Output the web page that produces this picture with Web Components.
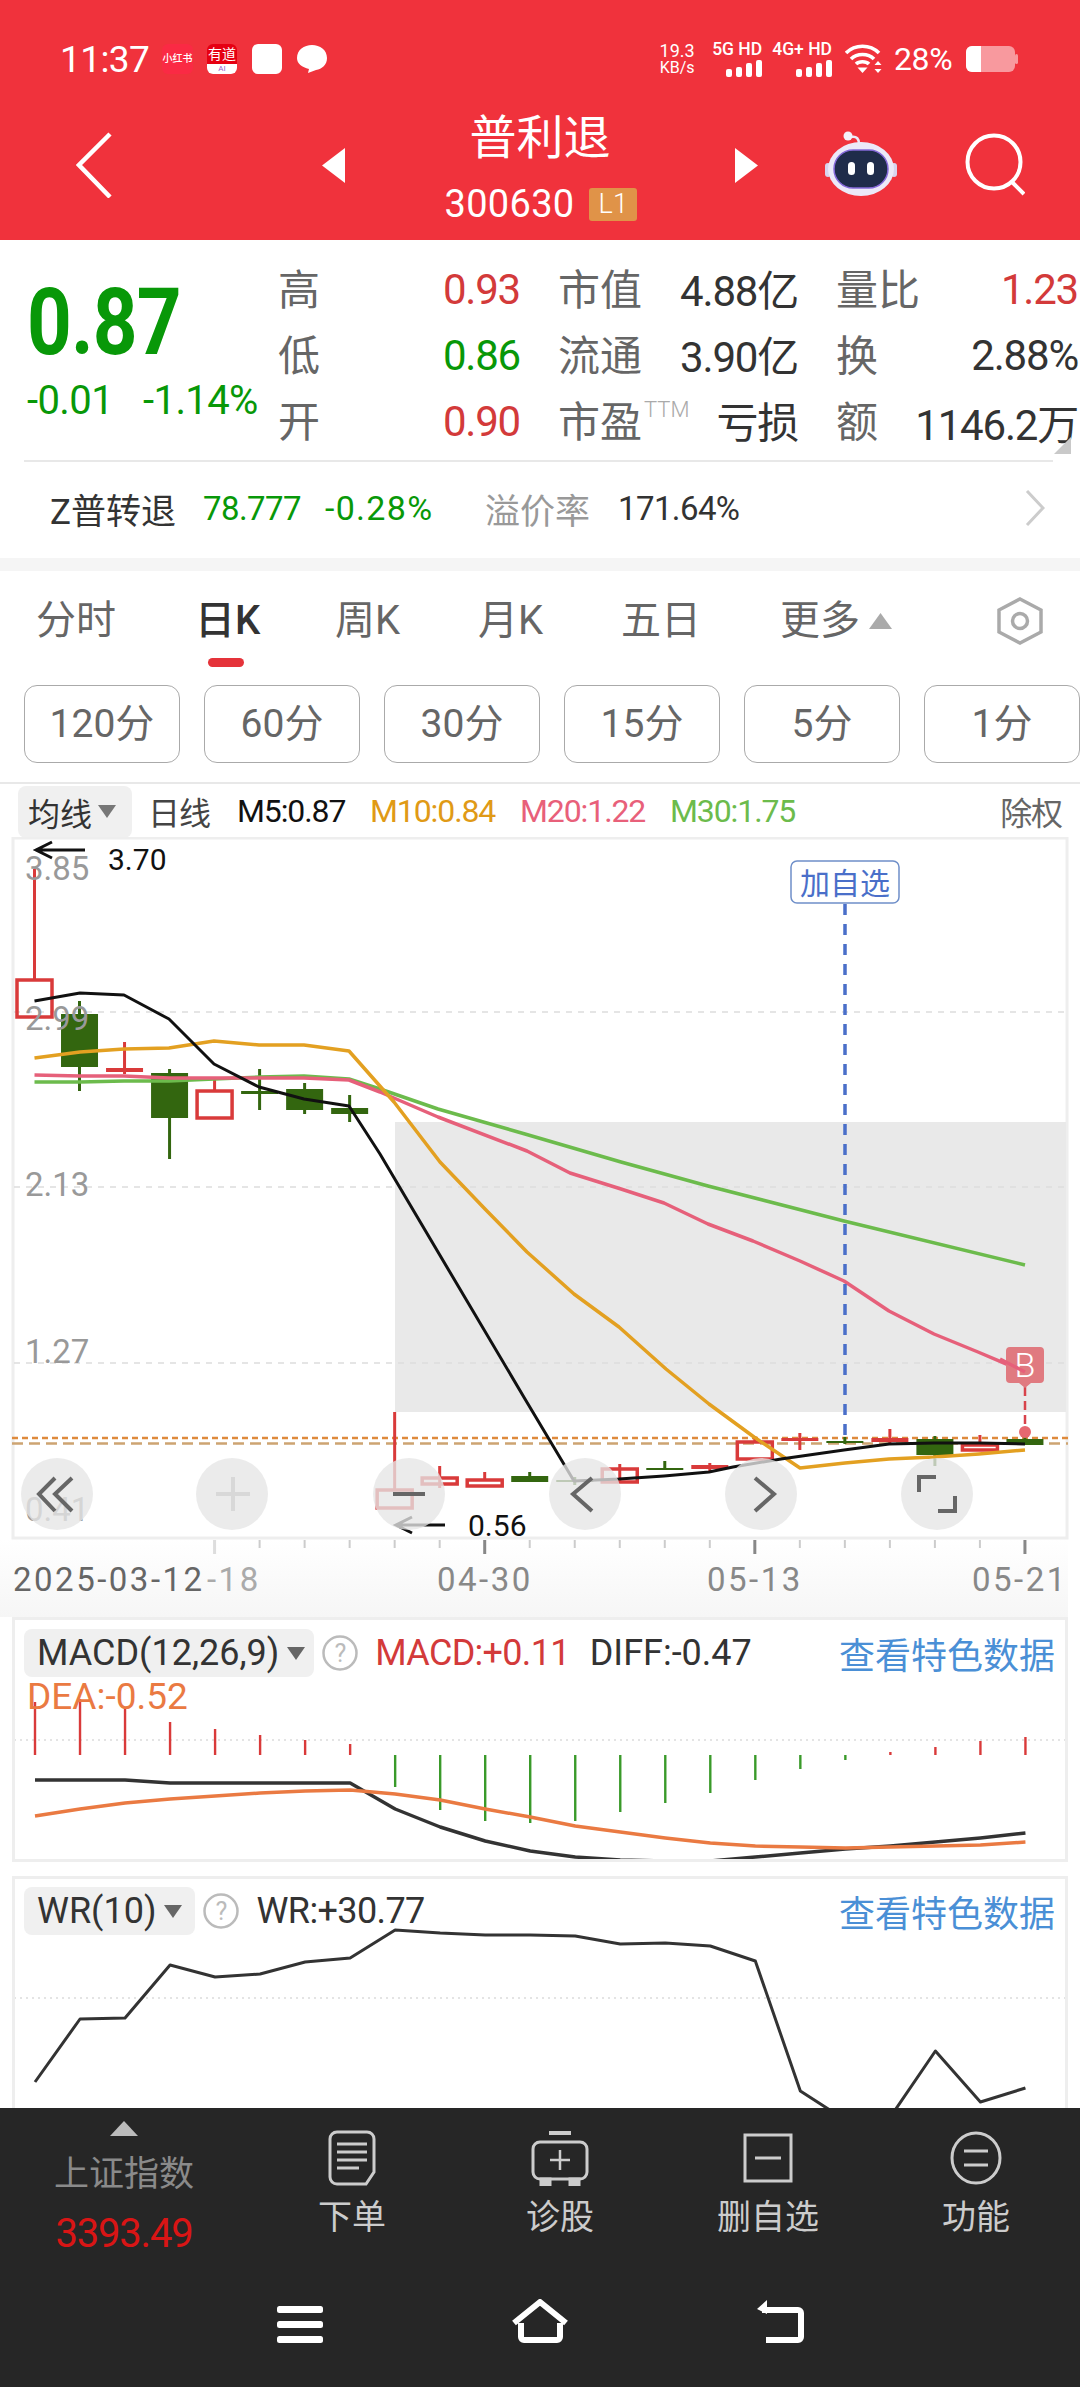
<!DOCTYPE html>
<html lang="zh">
<head>
<meta charset="utf-8">
<style>
  html, body { margin: 0; padding: 0; background: #fff; }
  body { width: 1080px; height: 2388px; overflow: hidden; font-family: Roboto, "Noto Sans CJK SC", sans-serif; display: flex; flex-direction: column; }
</style>
</head>
<body>
<status-bar></status-bar>
<stock-header name="普利退" code="300630" tag="L1"></stock-header>
<quote-panel></quote-panel>
<period-tabs></period-tabs>
<kline-chart></kline-chart>
<indicator-panel kind="macd" name="MACD(12,26,9)">
  <span style="color:#d33a3a;margin-left:17px">MACD:+0.11</span>
  <span style="color:#333;margin-left:20px;letter-spacing:0">DIFF:-0.47</span>
</indicator-panel>
<indicator-panel kind="wr" name="WR(10)">
  <span style="color:#333;margin-left:17px;letter-spacing:-.6px">WR:+30.77</span>
</indicator-panel>
<bottom-nav></bottom-nav>

<script>
class StatusBar extends HTMLElement {
  constructor () {
    super()
    this.attachShadow({ mode: 'open' })
  }

  connectedCallback () {
    const bars = `<svg width="36" height="17" viewBox="0 0 36 17"><g fill="#fff">
      <rect x="0" y="9" width="6" height="8" rx="2"/><rect x="10" y="7" width="6" height="10" rx="2"/>
      <rect x="20" y="3" width="6" height="14" rx="2"/><rect x="30" y="0" width="6" height="17" rx="2"/></g></svg>`
    this.shadowRoot.innerHTML = /*html*/`
    <style>
      :host { display: flex; justify-content: space-between; align-items: flex-start; height: 100px; box-sizing: border-box; padding: 44px 62px 0 60px; background: #f0323c; color: #fff; }
      .left, .right { display: flex; align-items: center; height: 30px; }
      .time { font-size: 37px; letter-spacing: -.6px; width: 102px; }
      .xhs { width: 31px; height: 30px; background: #fa2a44; border-radius: 6px; font-size: 10px; font-weight: 500; line-height: 30px; text-align: center; white-space: nowrap; overflow: hidden; }
      .yd { width: 30px; height: 30px; background: #e60012; border-radius: 6px; margin-left: 14px; font-size: 14px; line-height: 20px; text-align: center; position: relative; overflow: hidden; white-space: nowrap; }
      .yd b { position: absolute; left: 0; right: 0; bottom: 0; height: 10px; background: #fff; color: #9a5bd0; font: 8px/10px Roboto; }
      .sq { width: 30px; height: 30px; background: #fff; border-radius: 6px; margin-left: 15px; }
      .bubble { margin-left: 15px; display: block; }
      .speed { width: 36px; text-align: center; font-size: 18px; line-height: 17px; margin-right: 17px; white-space: nowrap; }
      .speed small { display: block; font-size: 16px; }
      .net { display: flex; flex-direction: column; align-items: flex-end; font-size: 17.500px; line-height: 15px; font-weight: 500; margin-right: 10px; gap: 3px; white-space: nowrap; }
      .wifi { margin-left: 3px; margin-right: 12px; display: block; }
      .pct { font-size: 32px; width: 61px; margin-right: 11px; letter-spacing: -.4px; white-space: nowrap; }
    </style>
    <div class="left">
      <span class="time">11:37</span>
      <span class="xhs">小红书</span>
      <span class="yd">有道<b>AI</b></span>
      <span class="sq"></span>
      <svg class="bubble" width="30" height="30" viewBox="0 0 30 30"><path d="M15 1c8 0 15 5 15 13 0 7-5 11-11 12l-8 3 1-4C5 23 0 20 0 14 0 6 7 1 15 1z" fill="#fff"/></svg>
    </div>
    <div class="right">
      <div class="speed">19.3<small>KB/s</small></div>
      <div class="net">5G HD${bars}</div>
      <div class="net">4G+ HD${bars}</div>
      <svg class="wifi" width="37" height="30" viewBox="0 0 37 30" fill="none" stroke="#fff" stroke-width="3.6">
        <path d="M1 9c9-9 24-9 33 0"/><path d="M6 15c6-6 17-6 23 0"/><path d="M11 20c3-3 10-3 13 0"/>
        <path d="M17.500 29l-5-5.500h10z" fill="#fff" stroke="none"/><path d="M33 17l-3.500 4h7zM33 29l-3.500-4h7z" fill="#fff" stroke="none"/>
      </svg>
      <span class="pct">28%</span>
      <svg width="52" height="26" viewBox="0 0 52 26"><rect x="0" width="49" height="26" rx="6" fill="#fff" opacity=".5"/><rect x="49" y="8" width="3" height="10" rx="1.500" fill="#fff" opacity=".5"/><path d="M6 0h9v26H6a6 6 0 0 1-6-6V6a6 6 0 0 1 6-6z" fill="#fff"/></svg>
    </div>
    `
  }
}

class StockHeader extends HTMLElement {
  constructor () {
    super()
    this.attachShadow({ mode: 'open' })
  }

  connectedCallback () {
    this.shadowRoot.innerHTML = /*html*/`
    <style>
      :host { display: grid; grid-template-columns: 76px 36px 210px 23px 390px 23px 67px 72px 68px 60px; align-items: center; height: 130px; padding-bottom: 10px; background: #f0323c; color: #fff; }
      .back { grid-column: 2; display: block; }
      .tri { display: block; }
      .mid { display: flex; flex-direction: column; align-items: center; padding-top: 6px; }
      .name { font-size: 47px; line-height: 46px; height: 46px; }
      .sub { display: flex; align-items: center; margin-top: 26px; margin-left: 2px; font-size: 38px; line-height: 34px; letter-spacing: .3px; }
      .tag { margin-left: 15px; width: 48px; height: 33px; background: #e09348; border-radius: 3px; font-size: 27px; line-height: 33px; text-align: center; font-weight: 300; }
      .bot { grid-column: 8; display: block; margin-top: -5px; }
    </style>
    <svg class="back" width="36" height="66" viewBox="0 0 36 66" fill="none" stroke="#fff" stroke-width="4.500"><path d="M34 2L3 33l31 32"/></svg>
    <svg class="tri" style="grid-column:4" width="23" height="35" viewBox="0 0 23 35"><path d="M23 0v35L0 17.500z" fill="#fff"/></svg>
    <div class="mid">
      <div class="name">${this.getAttribute('name')}</div>
      <div class="sub">${this.getAttribute('code')}<span class="tag">${this.getAttribute('tag')}</span></div>
    </div>
    <svg class="tri" width="23" height="35" viewBox="0 0 23 35"><path d="M0 0v35l23-17.500z" fill="#fff"/></svg>
    <svg class="bot" width="72" height="66" viewBox="0 0 72 66">
      <path d="M26 7c6-1 8 2 8 7" fill="none" stroke="#eceaf8" stroke-width="2.500"/><circle cx="23" cy="6" r="4.500" fill="#f4f2fb"/>
      <rect x="0" y="33" width="6" height="14" rx="3" fill="#d8d4ee"/><rect x="66" y="33" width="6" height="14" rx="3" fill="#d8d4ee"/>
      <ellipse cx="36" cy="39" rx="33" ry="27" fill="#ece9f8"/>
      <rect x="9" y="20" width="54" height="38" rx="19" fill="#1f2c4a" stroke="#8468d8" stroke-width="1.500"/>
      <rect x="23" y="32" width="7" height="13" rx="3.500" fill="#fff"/><rect x="42" y="32" width="7" height="13" rx="3.500" fill="#fff"/>
    </svg>
    <svg style="grid-column:10;display:block" width="60" height="64" viewBox="0 0 60 64" fill="none" stroke="#fff" stroke-width="4"><circle cx="29" cy="29" r="26.500"/><path d="M47 49l12 12"/></svg>
    `
  }
}

class QuotePanel extends HTMLElement {
  constructor () {
    super()
    this.attachShadow({ mode: 'open' })
  }

  connectedCallback () {
    const rows = [
      ['高', '0.93', 'r', '市值', '4.88亿', '量比', '1.23', 'r'],
      ['低', '0.86', 'g', '流通', '3.90亿', '换', '2.88%', ''],
      ['开', '0.90', 'r', '市盈<sup>TTM</sup>', '亏损', '额', '1146.2万', '']
    ]
    const cell = (a, b, c) => `<div class="cell"><span class="lb">${a}</span><span class="val ${c}">${b}</span></div>`
    this.shadowRoot.innerHTML = /*html*/`
    <style>
      :host { display: block; height: 318px; background: #fff; color: #333; position: relative; }
      .top { display: flex; height: 220px; box-sizing: border-box; padding: 16px 0 0 27px; }
      .price { width: 253px; flex: none; }
      .big { font-size: 93px; line-height: 91px; font-weight: 700; color: #089808; transform: scaleX(.84); transform-origin: 0 0; margin-top: 21px; letter-spacing: -1px; }
      .chg { display: flex; font-size: 40px; line-height: 40px; color: #089808; margin-top: 13px; letter-spacing: -.6px; white-space: nowrap; }
      .chg span + span { margin-left: 30px; }
      .grid { display: grid; grid-template-columns: 240px 238px 240px; column-gap: 40px; grid-auto-rows: 66px; align-items: center; }
      .cell { display: flex; justify-content: space-between; align-items: center; white-space: nowrap; }
      .lb { font-size: 42px; color: #666; position: relative; top: -3px; left: -2px; }
      sup { position: absolute; left: 86px; top: 11px; font-size: 22px; line-height: 22px; color: #aaa; font-weight: 300; }
      .val { font-size: 42px; letter-spacing: -1.200px; color: #333; }
      .cell:nth-child(3n+2) .val { position: relative; top: -2px; }
      .r { color: #d33a3a; }
      .g { color: #089808; }
      .corner { position: absolute; left: 1054px; top: 197px; }
      .line { margin: 0 27px 0 24px; height: 2px; background: #e8e8e8; }
      .bond { display: flex; align-items: center; height: 92px; padding: 0 0 4px 50px; font-size: 35px; white-space: nowrap; }
      .bond .num { font-size: 33px; letter-spacing: -.6px; }
      .bond .wide { font-size: 34px; letter-spacing: 1.300px; }
      .bond svg { margin-left: auto; margin-right: 35px; display: block; }
    </style>
    <div class="top">
      <div class="price">
        <div class="big">0.87</div>
        <div class="chg"><span>-0.01</span><span>-1.14%</span></div>
      </div>
      <div class="grid">
        ${rows.map(r => cell(r[0], r[1], r[2]) + cell(r[3], r[4], '') + cell(r[5], r[6], r[7])).join('')}
      </div>
    </div>
    <svg class="corner" width="17" height="17" viewBox="0 0 17 17"><path d="M17 0v17H0z" fill="#c9c9c9"/></svg>
    <div class="line"></div>
    <div class="bond">
      <span style="width:153px;color:#333">Z普转退</span>
      <span class="num" style="color:#089808;width:122px">78.777</span>
      <span class="num wide" style="color:#089808;width:160px">-0.28%</span>
      <span style="color:#999;width:133px">溢价率</span>
      <span class="num" style="color:#333">171.64%</span>
      <svg width="20" height="36" viewBox="0 0 20 36" fill="none" stroke="#ccc" stroke-width="3"><path d="M2 1l16 17L2 35"/></svg>
    </div>
    `
  }
}

class PeriodTabs extends HTMLElement {
  constructor () {
    super()
    this.attachShadow({ mode: 'open' })
  }

  connectedCallback () {
    const btns = ['120分', '60分', '30分', '15分', '5分', '1分']
    this.shadowRoot.innerHTML = /*html*/`
    <style>
      :host { display: block; background: #fff; border-top: 13px solid #f5f5f5; color: #666; }
      .tabs { display: grid; grid-template-columns: 159px 140px 143px 143px 159px 214px 48px; align-items: center; height: 96px; padding: 2px 0 0 36px; margin-bottom: 11px; font-size: 40px; line-height: 72px; white-space: nowrap; }
      .on { color: #333; position: relative; font-weight: 500; }
      .on::after { content: ""; position: absolute; left: 13px; top: 73px; width: 36px; height: 9px; border-radius: 5px; background: #e5333a; }
      .more { display: flex; align-items: center; gap: 9px; }
      .gear { margin-left: 2px; display: block; }
      .btns { display: flex; gap: 24px; padding: 5px 0 0 24px; overflow: hidden; }
      .btn { flex: none; width: 156px; height: 78px; box-sizing: border-box; border: 1px solid #aaa; border-radius: 13px; font-size: 39px; line-height: 76px; text-align: center; letter-spacing: 0; }
      .legend { display: flex; align-items: center; height: 55px; margin-top: 19px; border-top: 2px solid #e8e8e8; font-size: 32px; white-space: nowrap; box-sizing: border-box; padding: 0 18px; }
      .legend span { letter-spacing: -1.100px; }
      .drop { display: flex; align-items: center; gap: 6px; width: 114px; height: 52px; box-sizing: border-box; padding-left: 10px; background: #f0f0f0; border-radius: 8px; color: #333; margin-right: 16px; margin-top: 2px; }
      .cq { margin-left: auto; color: #666; font-size: 32px; padding-right: 0; }
    </style>
    <div class="tabs">
      <span>分时</span><span class="on">日K</span><span>周K</span><span>月K</span><span>五日</span>
      <span class="more">更多<svg width="23" height="16" viewBox="0 0 23 16"><path d="M11.500 0L23 16H0z" fill="#aaa"/></svg></span>
      <svg class="gear" width="48" height="48" viewBox="0 0 48 48" fill="none" stroke="#aaa"><path d="M24 2l21 11v22L24 46 3 35V13z" stroke-width="3.500"/><circle cx="24" cy="24" r="7.500" stroke-width="3.500"/></svg>
    </div>
    <div class="btns">${btns.map(b => `<div class="btn">${b}</div>`).join('')}</div>
    <div class="legend">
      <div class="drop">均线<svg width="18" height="13" viewBox="0 0 18 13"><path d="M0 0h18L9 13z" fill="#777"/></svg></div>
      <span style="color:#444;width:89px">日线</span>
      <span style="color:#111;width:133px">M5:0.87</span>
      <span style="color:#e09a16;width:150px">M10:0.84</span>
      <span style="color:#e8607a;width:150px">M20:1.22</span>
      <span style="color:#6cbb4c">M30:1.75</span>
      <span class="cq">除权</span>
    </div>
    `
  }
}

const XI = i => 34.5 + i * 45.02
const poly = (pts, color, w) => `<polyline points="${pts.map(p => p.join(',')).join(' ')}" fill="none" stroke="${color}" stroke-width="${w}" stroke-linejoin="round"/>`

class KlineChart extends HTMLElement {
  constructor () {
    super()
    this.attachShadow({ mode: 'open' })
  }

  connectedCallback () {
    const RED = '#d93a3a'
    const GREEN = '#33660f'
    // i, wick top, wick bottom, body top, body bottom, hollow
    const candles = [
      [0, 870, 980, 980, 1018, 1, 'r'], [1, 1002, 1092, 1015, 1068, 0, 'g'], [2, 1043, 1075, 1069, 1073, 0, 'r'],
      [3, 1070, 1160, 1074, 1119, 0, 'g'], [4, 1081, 1092, 1091, 1119, 1, 'r'], [5, 1070, 1111, 1092, 1095, 0, 'g'],
      [6, 1084, 1115, 1090, 1111, 0, 'g'], [7, 1096, 1123, 1109, 1115, 0, 'g'], [8, 1413, 1490, 1490, 1509, 1, 'r'],
      [9, 1467, 1489, 1478, 1485, 1, 'r'], [10, 1473, 1480, 1480, 1487, 1, 'r'], [11, 1473, 1483, 1477, 1483, 0, 'g'],
      [12, 1478, 1486, 1481, 1483, 0, 'g'], [13, 1465, 1483, 1469, 1483, 1, 'r'], [14, 1462, 1471, 1469, 1471, 0, 'g'],
      [15, 1464, 1472, 1466, 1470, 0, 'r'], [16, 1437, 1442, 1442, 1460, 1, 'r'], [17, 1434, 1451, 1439, 1442, 0, 'r'],
      [18, 1438, 1445, 1442, 1444, 0, 'g'], [19, 1430, 1446, 1439, 1443, 0, 'r'], [20, 1437, 1467, 1440, 1456, 0, 'g'],
      [21, 1436, 1445, 1445, 1451, 1, 'r'], [22, 1433, 1446, 1440, 1446, 0, 'g']
    ]
    const candleSvg = candles.map(([i, wt, wb, bt, bb, hollow, c]) => {
      const x = XI(i)
      const col = c === 'r' ? RED : GREEN
      const wick = `<line x1="${x}" x2="${x}" y1="${wt}" y2="${wb}" stroke="${col}" stroke-width="3"/>`
      return hollow
        ? wick + `<rect x="${x - 17.5}" y="${bt + 1}" width="35" height="${bb - bt - 1}" fill="none" stroke="${col}" stroke-width="3.500"/>`
        : wick + `<rect x="${x - 18.5}" y="${bt}" width="37" height="${bb - bt}" fill="${col}"/>`
    }).join('')

    const m5 = [[34.5, 1002], [80, 994], [124, 996], [169, 1020], [214, 1065], [259, 1088], [304, 1100], [349, 1107], [380, 1155], [525, 1400], [574, 1482], [619, 1480], [664, 1477], [709, 1473], [733, 1468], [781, 1460], [844, 1451], [889, 1445], [934, 1444], [979, 1444], [1025, 1445]]
    const m10 = [[34.5, 1059], [80, 1053], [124, 1050], [169, 1049], [214, 1042], [259, 1046], [304, 1046], [349, 1052], [394, 1103], [440, 1163], [485, 1210], [527, 1253], [574, 1295], [619, 1328], [666, 1370], [709, 1405], [754, 1438], [800, 1469], [845, 1464], [889, 1460], [934, 1458], [979, 1455], [1025, 1451]]
    const m20 = [[34.5, 1076], [80, 1077], [124, 1077], [169, 1079], [214, 1079], [259, 1079], [304, 1079], [349, 1081], [380, 1093], [438, 1118], [527, 1152], [570, 1174], [621, 1190], [664, 1204], [708, 1225], [753, 1242], [800, 1262], [844, 1282], [889, 1312], [934, 1335], [978, 1353], [1025, 1373]]
    const m30 = [[34.5, 1083], [80, 1083], [124, 1082], [169, 1082], [214, 1080], [259, 1078], [304, 1077], [349, 1080], [380, 1090], [438, 1110], [525, 1135], [621, 1163], [708, 1187], [844, 1222], [1025, 1266]]

    const ticks = []
    for (let i = 4; i < 23; i++) {
      const major = (i - 4) % 6 === 0
      ticks.push(`<line x1="${XI(i)}" x2="${XI(i)}" y1="1541" y2="${major ? 1555 : 1549}" stroke="${i === 4 ? '#ddd' : major ? '#888' : '#ccc'}" stroke-width="${major ? 3 : 2}"/>`)
    }
    const axis = (y, t) => `<text x="25" y="${y}" class="axis">${t}</text>`
    const date = (x, t, col) => `<text x="${x}" y="1592" class="date" fill="${col}">${t}</text>`
    const circle = x => `<circle cx="${x}" cy="1495" r="36" fill="#e6e6e6" fill-opacity=".78"/>`

    this.shadowRoot.innerHTML = /*html*/`
    <style>
      :host { display: block; height: 780px; background: #fff; }
      svg { display: block; }
      text { font-family: Roboto, "Noto Sans CJK SC", sans-serif; }
      .axis { font-size: 33px; fill: #999; }
      .hi { font-size: 30px; fill: #111; }
      .date { font-size: 33px; letter-spacing: 2.500px; }
    </style>
    <svg width="1080" height="780" viewBox="0 838 1080 780">
      <defs><linearGradient id="band" x1="0" y1="0" x2="0" y2="1"><stop offset="0" stop-color="#fff"/><stop offset="1" stop-color="#f6f6f6"/></linearGradient></defs>
      <rect x="0" y="1540" width="1068" height="78" fill="url(#band)"/>
      <rect x="13" y="839" width="1054" height="700" fill="#fff" stroke="#eee" stroke-width="3"/>
      <rect x="395" y="1123" width="671" height="290" fill="#e9e9e9"/>
      <g stroke="#ddd" stroke-width="1.500" stroke-dasharray="6 6">
        <line x1="14" x2="1066" y1="1013" y2="1013"/><line x1="14" x2="1066" y1="1188" y2="1188"/><line x1="14" x2="1066" y1="1364" y2="1364"/>
      </g>
      <line x1="12" x2="1068" y1="1439" y2="1439" stroke="#de8a3c" stroke-width="2.500" stroke-dasharray="6 4"/>
      <line x1="12" x2="1068" y1="1444.500" y2="1444.500" stroke="#cda472" stroke-width="2.500" stroke-dasharray="11 6"/>
      ${candleSvg}
      ${poly(m30, '#6cbb4c', 3.5)}
      ${poly(m20, '#e6607a', 3.5)}
      ${poly(m10, '#e3a021', 3.5)}
      ${poly(m5, '#111', 3)}
      <line x1="845" x2="845" y1="905" y2="1440" stroke="#4a6fc9" stroke-width="3.500" stroke-dasharray="11 9"/>
      <rect x="791" y="862" width="108" height="42" rx="6" fill="#fff" stroke="#6f8fc9" stroke-width="1.500"/>
      <text x="845" y="895" text-anchor="middle" font-size="30" fill="#4a6fc9">加自选</text>
      <line x1="1025" x2="1025" y1="1388" y2="1430" stroke="#d8434b" stroke-width="2.500" stroke-dasharray="9 5"/>
      <circle cx="1025" cy="1433" r="6" fill="#e66870"/>
      <path d="M1010 1348h30a4 4 0 0 1 4 4v28a4 4 0 0 1-4 4h-9l-6 5-6-5h-9a4 4 0 0 1-4-4v-28a4 4 0 0 1 4-4z" fill="#e07a80"/>
      <text x="1025" y="1378" text-anchor="middle" font-size="34" font-weight="300" fill="#fff">B</text>
      <polyline points="1000,1360 1025,1373" fill="none" stroke="#e6607a" stroke-width="3.500"/>
      ${axis(881, '3.85')}${axis(1031, '2.99')}${axis(1197, '2.13')}${axis(1364, '1.27')}
      <path d="M85 851H36M52 843l-16 8 16 8" fill="none" stroke="#111" stroke-width="3"/>
      <text x="108" y="871" class="hi">3.70</text>
      <path d="M445 1526H396M412 1518l-16 8 16 8" fill="none" stroke="#111" stroke-width="3"/>
      <text x="468" y="1537" class="hi">0.56</text>
      ${axis(1522, '0.41')}
      ${[57, 232, 409, 585, 761, 937].map(circle).join('')}
      <g fill="none" stroke="#666" stroke-width="4">
        <path d="M55 1479l-16 16 16 17M72 1479l-17 16 17 17"/>
        <path d="M393 1495h32"/>
        <path d="M592 1479l-19 16 19 17"/>
        <path d="M755 1479l19 16-19 17"/>
        <path d="M919 1493v-15h17M938 1512h17v-15"/>
      </g>
      <path d="M216 1495h34M233 1478v34" fill="none" stroke="#d8d8d8" stroke-width="4"/>
      ${ticks.join('')}
      ${date(13, '2025-03-12', '#666')}${date(207, '-18', '#aaa')}${date(437, '04-30', '#888')}${date(707, '05-13', '#888')}${date(972, '05-21', '#888')}
    </svg>
    `
  }
}

class IndicatorPanel extends HTMLElement {
  constructor () {
    super()
    this.attachShadow({ mode: 'open' })
  }

  connectedCallback () {
    const kind = this.getAttribute('kind')
    const help = `<svg class="help" width="36" height="36" viewBox="0 0 36 36"><circle cx="18" cy="18" r="16.500" fill="#fff" stroke="#bbb" stroke-width="2.500"/><text x="18" y="27" text-anchor="middle" font-size="25" fill="#bbb">?</text></svg>`
    const X = i => 35 + i * 45.02
    let chart
    let height
    if (kind === 'macd') {
      height = 245
      const red = [1703, 1700, 1709, 1723, 1730, 1736, 1741, 1745]
      const green = [1788, 1811, 1822, 1824, 1822, 1813, 1804, 1794, 1781, 1770, 1761]
      const red2 = [1753, 1748, 1742, 1738]
      const bars = red.map((y, i) => `<line x1="${X(i)}" x2="${X(i)}" y1="${y}" y2="1756" stroke="#d93a3a"/>`)
        .concat(green.map((y, i) => `<line x1="${X(i + 8)}" x2="${X(i + 8)}" y1="1756" y2="${y}" stroke="#3a9a2a"/>`))
        .concat(red2.map((y, i) => `<line x1="${X(i + 19)}" x2="${X(i + 19)}" y1="${y}" y2="1756" stroke="#d93a3a"/>`))
      const diff = [1781, 1781, 1781, 1784, 1784, 1784, 1784, 1784, 1810, 1828, 1842, 1852, 1858, 1861, 1862, 1862, 1858, 1854, 1850, 1847, 1843, 1839, 1834].map((y, i) => [X(i), y])
      const dea = [1817, 1810, 1804, 1800, 1797, 1794, 1792, 1791, 1795, 1801, 1810, 1818, 1827, 1833, 1839, 1844, 1847, 1848, 1849, 1848, 1847, 1846, 1843].map((y, i) => [X(i), y])
      chart = `<svg width="1080" height="245" viewBox="0 1618 1080 245">
        <line x1="14" x2="1066" y1="1741" y2="1741" stroke="#e4e4e4" stroke-width="2" stroke-dasharray="2 4"/>
        <g stroke-width="2.400">${bars.join('')}</g>
        ${poly(diff, '#333', 3.5)}${poly(dea, '#ea7a42', 3.5)}
      </svg>`
    } else {
      height = 232
      const wr = [2083, 2020, 2019, 1966, 1978, 1975, 1963, 1959, 1931, 1934, 1936, 1936, 1937, 1945, 1944, 1947, 1962, 2092, 2121, 2118, 2052, 2103, 2089].map((y, i) => [X(i), y])
      chart = `<svg width="1080" height="232" viewBox="0 1877 1080 232">
        <line x1="14" x2="1066" y1="1999" y2="1999" stroke="#e4e4e4" stroke-width="2" stroke-dasharray="2 4"/>
        ${poly(wr, '#333', 3)}
      </svg>`
    }
    this.shadowRoot.innerHTML = /*html*/`
    <style>
      :host { display: block; height: ${height}px; position: relative; background: #fff; overflow: hidden; }
      :host([kind="wr"]) { margin-top: 14px; }
      svg { display: block; }
      .frame { position: absolute; inset: 0 12px ${kind === 'macd' ? '0' : '-3px'} 12px; border: 3px solid #eee; pointer-events: none; }
      .over { position: absolute; left: 24px; right: 25px; top: ${kind === 'macd' ? 12 : 11}px; }
      .head { display: flex; align-items: center; height: 48px; font-size: 36px; white-space: nowrap; letter-spacing: -.7px; }
      .drop { display: flex; align-items: center; gap: 8px; height: 48px; box-sizing: border-box; padding: 0 ${kind === 'macd' ? 9 : 13}px 0 13px; background: #f0f0f0; border-radius: 8px; color: #333; margin-right: 8px; letter-spacing: 0; }
      .help text { font-family: Roboto, sans-serif; }
      .link { margin-left: auto; color: #4a8fd6; font-size: 36px; letter-spacing: 0; }
      .dea { display: ${kind === 'macd' ? 'block' : 'none'}; font-size: 37px; line-height: 40px; color: #ea7a42; margin-left: 3px; }
    </style>
    <div>${chart}</div>
    <div class="frame"></div>
    <div class="over">
      <div class="head">
        <div class="drop">${this.getAttribute('name')}<svg width="18" height="13" viewBox="0 0 18 13"><path d="M0 0h18L9 13z" fill="#666"/></svg></div>
        ${help}
        <slot></slot>
        <span class="link">查看特色数据</span>
      </div>
      <div class="dea">DEA:-0.52</div>
    </div>
    `
  }
}

class BottomNav extends HTMLElement {
  constructor () {
    super()
    this.attachShadow({ mode: 'open' })
  }

  connectedCallback () {
    const icons = {
      order: `<svg width="48" height="56" viewBox="0 0 48 56" fill="none" stroke="#ccc" stroke-width="3"><path d="M9 2h30a7 7 0 0 1 7 7v33l-8 12H9a7 7 0 0 1-7-7V9a7 7 0 0 1 7-7z"/><path d="M9 14h30M9 22h30M9 30h30M9 38h22"/></svg>`,
      diag: `<svg width="58" height="56" viewBox="0 0 58 56" fill="none" stroke="#ccc" stroke-width="3"><path d="M18 3h22" stroke-width="4"/><rect x="2" y="12" width="54" height="37" rx="7"/><path d="M19 30h20M29 20v20" stroke-width="2.500"/><path d="M10 49h9v6h-9zM39 49h9v6h-9z" fill="#ccc"/></svg>`,
      del: `<svg width="50" height="50" viewBox="0 0 50 50" fill="none" stroke="#ccc" stroke-width="3"><rect x="2" y="2" width="46" height="46"/><path d="M12 25h26"/></svg>`,
      fn: `<svg width="52" height="54" viewBox="0 0 52 54" fill="none" stroke="#ccc" stroke-width="3"><ellipse cx="26" cy="27" rx="24" ry="25"/><path d="M14 20h24M14 34h24"/></svg>`
    }
    const items = [['下单', icons.order], ['诊股', icons.diag], ['删自选', icons.del], ['功能', icons.fn]]
    this.shadowRoot.innerHTML = /*html*/`
    <style>
      :host { display: block; height: 279px; background: #262626; color: #ccc; position: relative; }
      .top { display: grid; grid-template-columns: 248px repeat(4, 208px); height: 191px; }
      .index { display: flex; flex-direction: column; align-items: center; padding-top: 13px; }
      .index b { font-weight: 400; font-size: 35px; line-height: 40px; color: #8a8a8a; margin-top: 19px; }
      .index i { font-style: normal; font-size: 40px; line-height: 42px; color: #d91515; margin-top: 18px; letter-spacing: -1.200px; }
      .item { display: flex; flex-direction: column; align-items: center; justify-content: flex-start; padding-top: 22px; height: 169px; }
      .ic { height: 56px; display: flex; align-items: center; }
      .item span { font-size: 34px; line-height: 40px; margin-top: 11px; white-space: nowrap; }
      .sys { display: grid; grid-template-columns: repeat(3, 240px); padding-left: 180px; justify-items: center; }
      .sys svg { display: block; }
    </style>
    <div class="top">
      <div class="index">
        <svg width="28" height="15" viewBox="0 0 28 15"><path d="M14 0l14 15H0z" fill="#bbb"/></svg>
        <b>上证指数</b>
        <i>3393.49</i>
      </div>
      ${items.map(([t, ic]) => `<div class="item"><div class="ic">${ic}</div><span>${t}</span></div>`).join('')}
    </div>
    <div class="sys">
      <svg width="46" height="44" viewBox="0 0 46 44"><g fill="#fff"><rect y="7" width="46" height="7" rx="2.500"/><rect y="22" width="46" height="7" rx="2.500"/><rect y="37" width="46" height="7" rx="2.500"/></g></svg>
      <svg width="58" height="44" viewBox="0 0 58 44" fill="none" stroke="#fff" stroke-width="6"><path d="M3 24L29 3l26 21" stroke-linejoin="round"/><path d="M10 24v14a3 3 0 0 0 3 3h33a3 3 0 0 0 3-3V24"/></svg>
      <svg width="48" height="44" viewBox="0 0 48 44" fill="none" stroke="#fff" stroke-width="6"><path d="M6 11h36a3 3 0 0 1 3 3v24a3 3 0 0 1-3 3H10"/><path d="M11 1L1 10l10 5" fill="#fff" stroke="none"/></svg>
    </div>
    `
  }
}

customElements.define('status-bar', StatusBar)
customElements.define('stock-header', StockHeader)
customElements.define('quote-panel', QuotePanel)
customElements.define('period-tabs', PeriodTabs)
customElements.define('kline-chart', KlineChart)
customElements.define('indicator-panel', IndicatorPanel)
customElements.define('bottom-nav', BottomNav)
</script>
</body>
</html>
